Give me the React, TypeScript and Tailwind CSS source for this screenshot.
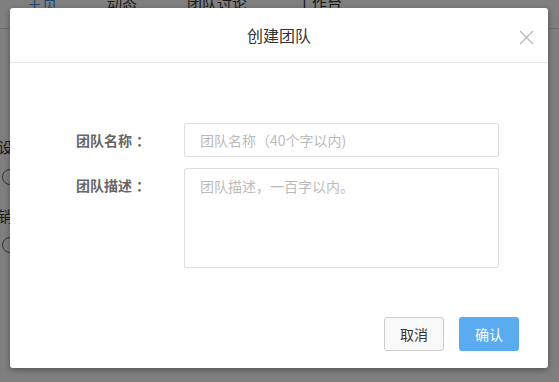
import React from "react";

export default function App() {
  const font = { fontFamily: '"Noto Sans CJK SC", "Liberation Sans", sans-serif' };
  return (
    <div className="relative w-[559px] h-[382px] overflow-hidden bg-white" style={font}>
      {/* background page */}
      <div className="flex flex-col">
        <div className="h-[37px] border-b border-[#ddd] flex items-start gap-[50px] pl-[27px] -mt-[8px] text-[15px] text-[#333]">
          <span className="text-[#3a8ee6]">主页</span>
          <span>动态</span>
          <span>团队讨论</span>
          <span>工作台</span>
        </div>
        <div className="flex flex-col pt-[107px] text-[15px] text-[#333] gap-[10px]">
          <span className="-ml-[2px]">设置</span>
          <span className="w-[16px] h-[16px] ml-[2px] rounded-full border border-[#666]" />
          <span className="-ml-[2px] mt-[10px]">销毁</span>
          <span className="w-[16px] h-[16px] ml-[2px] rounded-full border border-[#666]" />
        </div>
      </div>
      {/* overlay */}
      <div className="absolute inset-0 bg-black/50" />
      {/* modal */}
      <div className="absolute left-[10px] top-[8px] w-[538px] h-[360px] bg-white rounded-[3px] shadow-[0_2px_6px_rgba(0,0,0,0.35)] flex flex-col">
        <div className="relative h-[55px] border-b border-[#e5e5e5] flex items-center justify-center">
          <span className="text-[16px] text-[#333] leading-none">创建团队</span>
          <svg className="absolute right-[14px] top-[22px]" width="15" height="15" viewBox="0 0 15 15">
            <path d="M1 1L14 14M14 1L1 14" stroke="#b5b5b5" strokeWidth="1.2" fill="none" />
          </svg>
        </div>
        <div className="flex flex-col pl-[66px] pt-[60px] gap-[11px]">
          <div className="flex items-center">
            <span className="w-[108px] text-[14px] font-bold text-[#666]">
              团队名称<span className="ml-[4px]">：</span>
            </span>
            <div className="w-[315px] h-[34px] border border-[#ddd] rounded-[2px] flex items-center pl-[15px] text-[14px] text-[#bbb]">
              团队名称（40个字以内)
            </div>
          </div>
          <div className="flex items-start">
            <span className="w-[108px] text-[14px] font-bold text-[#666] pt-[7px]">
              团队描述<span className="ml-[4px]">：</span>
            </span>
            <div className="w-[315px] h-[100px] border border-[#ddd] rounded-[2px] pl-[15px] pt-[7px] text-[14px] text-[#bbb]">
              团队描述，一百字以内。
            </div>
          </div>
        </div>
        <div className="mt-auto flex justify-end gap-[15px] pr-[29px] pb-[17px]">
          <button className="w-[60px] h-[34px] rounded-[3px] border border-[#ccc] bg-[#f9f9f9] text-[14px] text-[#333]">
            取消
          </button>
          <button className="w-[60px] h-[34px] rounded-[3px] bg-[#5aabef] text-[14px] text-white">
            确认
          </button>
        </div>
      </div>
    </div>
  );
}
